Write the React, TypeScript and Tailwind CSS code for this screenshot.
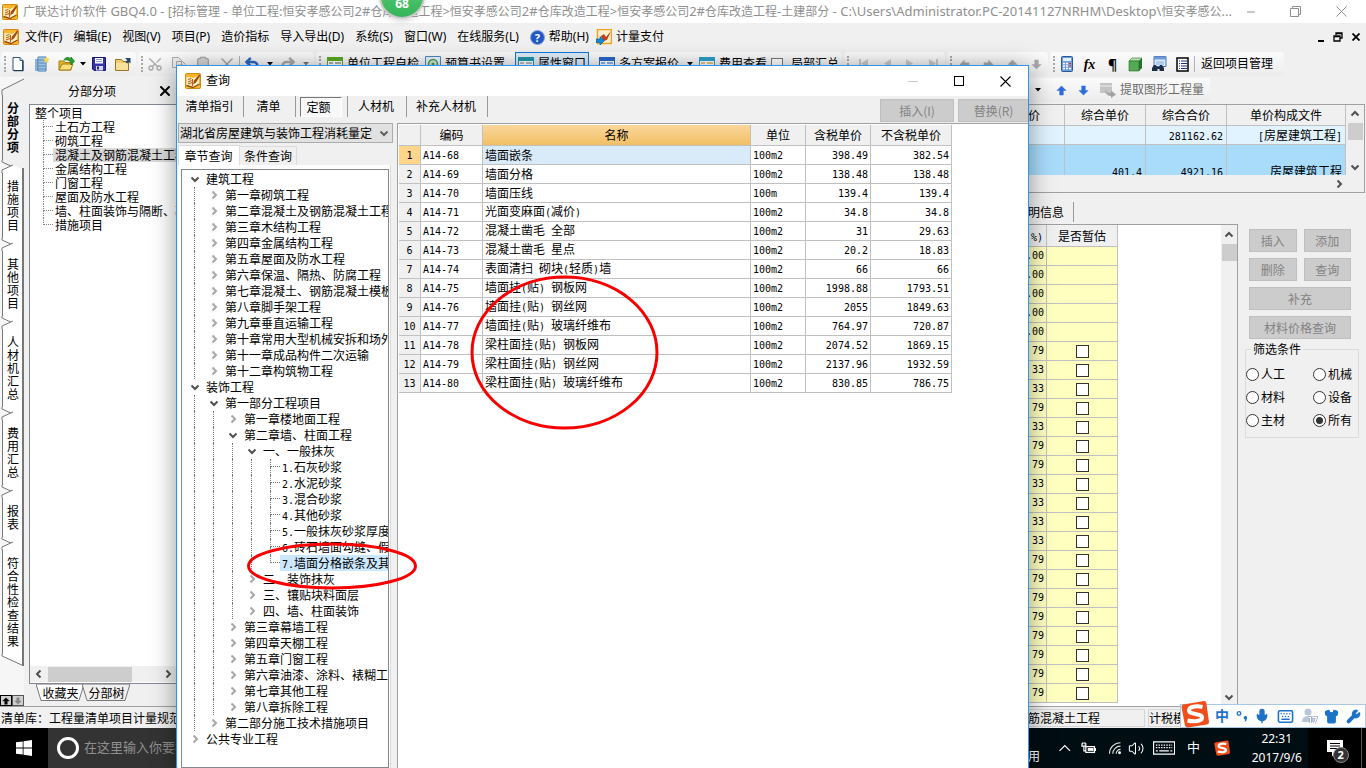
import React from "react";
import clsx from "clsx";
import { Keyboard, Mic, Shirt, Wrench, Volume2, Minus, X, Scissors, Clipboard, Undo2, Redo2 } from "lucide-react";

const song = "font-['Noto_Sans_CJK_SC',sans-serif]";
const ui = "font-['Noto_Sans','Noto_Sans_CJK_SC',sans-serif]";

/* Half-width runs are set in a monospaced face that takes half a Chinese character each. */
function Mixed({ text, latin = "font-['DejaVu_Sans_Mono',monospace] text-[10px]" }: { text: string; latin?: string }) {
  return (
    <>
      {text.split(/([\x20-\x7e]+)/).map((part, i) =>
        i % 2 ? (
          <span key={i} className={clsx("whitespace-pre", latin)}>
            {part}
          </span>
        ) : (
          part
        ),
      )}
    </>
  );
}

function AppIcon({ className = "size-4" }: { className?: string }) {
  return (
    <svg viewBox="0 0 16 16" className={clsx("shrink-0", className)} aria-hidden>
      <rect x="0.5" y="0.5" width="15" height="15" rx="1" fill="#f7b52c" stroke="#d08a10" />
      <path d="M1.500 4 7 4.500l1 .8 6-3.300v9.500l-5.500 3-7-2z" fill="#fff3cf" />
      <path d="M3 6.500 6.500 5.500M3 9l3.500-1.500M3 11l4-1.500M7.500 6v7" stroke="#b5650f" strokeWidth="1.100" fill="none" />
      <path d="M14.500 1 9 7.500 8 11.500l3-2L15 3z" fill="#a8470c" />
      <path d="m1.500 12.500 6.500 2 6.500-3.500" stroke="#9c4a06" strokeWidth="1.400" fill="none" />
    </svg>
  );
}

function Chevron({ dir, className = "text-[#505050]" }: { dir: "up" | "down" | "left" | "right"; className?: string }) {
  const d = { up: "M1.5 6.5 5 3l3.5 3.5", down: "M1.5 3.5 5 7l3.5-3.5", left: "M6.5 1.5 3 5l3.5 3.5", right: "M3.5 1.5 7 5 3.5 8.5" }[dir];
  return (
    <svg viewBox="0 0 10 10" className={clsx("size-[10px] shrink-0", className)} aria-hidden>
      <path d={d} fill="none" stroke="currentColor" strokeWidth="2" />
    </svg>
  );
}

const Grip = () => <span className="mr-1 h-4 w-0 shrink-0 border-l-2 border-dotted border-[#a8a8a8]" />;
const Sep = () => <span className="h-4 w-px shrink-0 bg-[#b4b4b4]" />;
const Caret = ({ className = "text-black" }: { className?: string }) => (
  <svg viewBox="0 0 6 4" className={clsx("h-1 w-[6px] shrink-0", className)} aria-hidden>
    <path d="M0 0h6L3 3.5z" fill="currentColor" />
  </svg>
);

function ToolButton({ label, width = "w-6", className, children }: { label: string; width?: string; className?: string; children: React.ReactNode }) {
  return (
    <button aria-label={label} className={clsx("flex h-5 shrink-0 items-center justify-center", width, className)}>
      {children}
    </button>
  );
}

function ToolGroup({ className, children }: { className: string; children: React.ReactNode }) {
  return (
    <div className={clsx("flex h-6 shrink-0 items-center rounded-sm bg-linear-to-b from-[#fbfbfb] to-[#ececec] pl-[3px]", className)}>
      {children}
    </div>
  );
}

const NewDoc = () => (
  <svg viewBox="0 0 16 16" className="size-4"><path d="M3 1.5h7l3 3v10H3z" fill="#fff" stroke="#2f5577" /><path d="M10 1.5v3h3" fill="#cfe3f5" stroke="#2f5577" /><path d="M12.8 5v9.7H4" fill="none" stroke="#1d3c5c" strokeWidth="1.3" /></svg>
);
const NewBuilding = () => (
  <svg viewBox="0 0 16 16" className="size-4"><path d="M1 3h3v12H1z" fill="#8ab4dc" /><path d="M4 1h8v14H4z" fill="#d7e9f8" stroke="#3f74ad" /><path d="M6 2v12M8 2v12M10 2v12M4 4h8M4 7h8M4 10h8M4 13h8" stroke="#4a7db5" strokeWidth=".8" /><path d="m12.5 0 1 2.3L16 3l-2 1.5.5 2.5-2-1.3-2 1.3.5-2.5L9 3l2.500-.7z" fill="#f6d94b" /></svg>
);
const OpenFolder = () => (
  <svg viewBox="0 0 17 16" className="h-4 w-[17px]"><path d="M1 5h5l1 1.500h6V14H1z" fill="#e5b62c" stroke="#a67d10" /><path d="m1 14 3-6h11l-2.500 6z" fill="#fbe07c" stroke="#a67d10" /><path d="M6 4c1-3 5-3.500 7-.8V1l3.500 4.200L13 9V6.500C11 4 8.500 3.500 6 4z" fill="#2ba32b" stroke="#0d6b12" strokeWidth=".7" /></svg>
);
const Save = () => (
  <svg viewBox="0 0 14 14" className="size-[14px]"><path d="M.5.5h13v13H2l-1.500-1.500z" fill="#3533a8" stroke="#16146e" /><path d="M3 1h8v5.500H3z" fill="#fff" /><path d="M4 2.500h6M4 4.500h6" stroke="#8d9cc8" /><path d="M4 9h7v4.500H4z" fill="#d5d8ef" /><path d="M5 9.500h2v3H5z" fill="#24227e" /></svg>
);
const Folder = () => (
  <svg viewBox="0 0 16 14" className="h-[14px] w-4"><path d="M.5 2.500h6l1.500 2h5.500v9H.5z" fill="#f3cd6c" stroke="#96742a" /><path d="M1 6h12v7H1z" fill="#fbe09a" /><path d="M10 1h5.500v5.500L13.800 5 12 6.500 10.500 5l1.800-1.800z" fill="#25466e" /></svg>
);

function Help() {
  return (
    <span className="flex size-[15px] items-center justify-center rounded-full border border-[#8aa3d8] bg-[#2158c8] text-[11px] leading-none font-bold text-white">?</span>
  );
}

const documentTitle =
  "广联达计价软件 GBQ4.0 - [招标管理 - 单位工程:恒安孝感公司2#仓库改造工程>恒安孝感公司2#仓库改造工程>恒安孝感公司2#仓库改造工程-土建部分 - C:\\Users\\Administrator.PC-20141127NRHM\\Desktop\\恒安孝感公...";

function TitleBar() {
  return (
    <header className="flex h-[23px] shrink-0 items-center bg-white pl-[2px] text-[#8f8f8f]">
      <AppIcon />
      <h1 className="ml-[5px] w-0 flex-1 overflow-hidden text-[12px] leading-5 whitespace-nowrap">
        <Mixed text={documentTitle} latin="text-[13px]" />
      </h1>
      <div className="flex shrink-0 pr-[2px]">
        <button aria-label="最小化" className="flex w-10 justify-center pr-1"><Minus className="h-3 w-3" strokeWidth={2} /></button>
        <button aria-label="还原" className="flex w-[45px] justify-center">
          <svg viewBox="0 0 11 11" className="size-[11px]"><path d="M.5 2.500h8v8h-8zM2.500 2.500v-2h8v8h-2" fill="none" stroke="currentColor" /></svg>
        </button>
        <button aria-label="关闭" className="flex w-[46px] justify-center">
          <svg viewBox="0 0 11 11" className="size-[11px]"><path d="m.5.5 10 10m0-10-10 10" stroke="currentColor" /></svg>
        </button>
      </div>
    </header>
  );
}

const menus = ["文件(F)", "编辑(E)", "视图(V)", "项目(P)", "造价指标", "导入导出(D)", "系统(S)", "窗口(W)", "在线服务(L)"];

function MenuBar() {
  return (
    <nav className="flex h-7 shrink-0 items-center pl-[3px] text-[12px] whitespace-nowrap text-black">
      <AppIcon />
      <div className="ml-[6px] flex gap-[11px]">
        {menus.map((m) => <button key={m}>{m}</button>)}
        <button className="flex items-center gap-1"><Help />帮助(H)</button>
        <button className="-ml-1 flex items-center gap-1">
          <svg viewBox="0 0 16 16" className="size-4"><path d="M1.500.5h14v14h-14z" fill="#fdf0d0" stroke="#f0a21a" strokeWidth="1.500" /><path d="m5 7 3-2 2 3 5-6-4 9-4 1z" fill="#c2401a" /><path d="M0 10h4V7.500l4.500 4.200L4 16v-2.500H0z" fill="#1788d8" stroke="#07528a" strokeWidth=".6" /></svg>
          计量支付
        </button>
      </div>
      <div className="ml-auto flex items-center gap-[9px] pr-[6px]">
        <button aria-label="最小化子窗口" className="flex h-3 items-end pb-px"><span className="h-[2px] w-[6px] bg-black" /></button>
        <button aria-label="还原子窗口"><svg viewBox="0 0 10 10" className="size-[10px]"><path d="M3 3V1h6v5H7M3 1.500h6M1 4h6v5H1zM1 4.500h6" fill="none" stroke="#000" strokeWidth="1.300" /></svg></button>
        <button aria-label="关闭子窗口"><svg viewBox="0 0 8 8" className="size-2"><path d="m.5.5 7 7m0-7-7 7" stroke="#000" strokeWidth="1.800" /></svg></button>
      </div>
    </nav>
  );
}

const gray = "text-[#a9a9a9]";

function Arrow({ turn = "", size = "size-[11px]", className = "text-[#a9a9a9]" }: { turn?: string; size?: string; className?: string }) {
  return (
    <svg viewBox="0 0 12 12" className={clsx(size, turn, className)} aria-hidden><path d="M6 1 1 6h3v5h4V6h3z" fill="currentColor" stroke="currentColor" strokeWidth=".5" /></svg>
  );
}

function TableIcon({ head, body }: { head: string; body: string }) {
  return (
    <svg viewBox="0 0 16 14" className="mr-1 h-[14px] w-4 shrink-0"><path d="M.5.5h15v13H.5z" fill="#fff" stroke={head} /><path d="M0 0h16v4H0z" fill={head} /><path d="M2 6h4M2 9h4M2 12h4M8 6h6M8 9h6M8 12h6" stroke={body} strokeWidth="1.500" /></svg>
  );
}

function Toolbar() {
  return (
    <div className="flex h-[26px] shrink-0 items-center gap-[2px] pl-px text-[12px] whitespace-nowrap">
      <ToolGroup className="w-[135px]">
        <Grip />
        <ToolButton label="新建" className="-ml-1"><NewDoc /></ToolButton>
        <ToolButton label="新建项目"><NewBuilding /></ToolButton>
        <ToolButton label="打开"><OpenFolder /></ToolButton>
        <ToolButton label="打开列表" width="w-[9px]"><Caret /></ToolButton>
        <ToolButton label="保存"><Save /></ToolButton>
        <ToolButton label="文件夹"><Folder /></ToolButton>
      </ToolGroup>
      <ToolGroup className={clsx("w-[176px]", gray)}>
        <Grip />
        <ToolButton label="剪切" className="-ml-1"><Scissors className="size-4 -rotate-90" /></ToolButton>
        <ToolButton label="复制">
          <svg viewBox="0 0 16 16" className="size-4"><path d="M1.500 1.500h6l3 3v7h-9zM5.500 5.500h6l3 3v7h-9z" fill="#eee" stroke="currentColor" /><path d="M7 9h5M7 11h6M7 13h6" stroke="currentColor" /></svg>
        </ToolButton>
        <ToolButton label="粘贴"><Clipboard className="size-4" fill="#d5d5d5" /></ToolButton>
        <ToolButton label="删除"><X className="size-5" /></ToolButton>
        <Sep />
        <ToolButton label="撤销" className="text-[#2d66c4]"><Undo2 className="size-4" strokeWidth={4} /></ToolButton>
        <ToolButton label="撤销列表" width="w-3"><Caret /></ToolButton>
        <ToolButton label="重做"><Redo2 className="size-4" strokeWidth={4} /></ToolButton>
        <ToolButton label="重做列表" width="w-3"><Caret className="text-[#777]" /></ToolButton>
      </ToolGroup>
      <ToolGroup className="w-[526px]">
        <Grip />
        <button className="ml-[2px] flex items-center"><TableIcon head="#5aa820" body="#8a9a80" />单位工程自检</button>
        <button className="ml-[6px] flex items-center">
          <svg viewBox="0 0 16 16" className="mr-1 size-4"><path d="M.5.5h15v15H.5z" fill="#e6f2fb" stroke="#4c87c0" /><circle cx="8" cy="8" r="4.500" fill="#cfe9cf" stroke="#4d9a63" strokeWidth="1.500" /><circle cx="8" cy="8" r="1.500" fill="#4d9a63" /></svg>
          预算书设置
        </button>
        <span className="ml-2"><Sep /></span>
        <button className="ml-[2px] flex h-6 items-center border border-[#0a78d7] bg-[#dcebf8] px-[2px]"><TableIcon head="#1f94a8" body="#9ba7ad" />属性窗口</button>
        <span className="ml-1"><Sep /></span>
        <button className="ml-[6px] flex items-center"><TableIcon head="#2b67c4" body="#5f9be0" /><span className="pr-2">多方案报价</span><Caret /></button>
        <button className="ml-[6px] flex items-center"><TableIcon head="#2a9fc9" body="#e3b04c" />费用查看</button>
        <label className="ml-1 flex items-center gap-2"><input type="checkbox" className="size-3 appearance-none border border-[#777] bg-white" />局部汇总</label>
      </ToolGroup>
      <ToolGroup className={clsx("w-[101px]", gray)}>
        <Grip />
        {["首条", "上一条", "下一条", "末条"].map((l, i) => (
          <ToolButton key={l} label={l} className="-ml-px">
            <svg viewBox="0 0 10 10" className={clsx("size-[10px]", i > 1 && "-scale-x-100")}><path d="M9 0v9L2 4.500z" fill="#c8c8c8" />{(i === 0 || i === 3) && <path d="M1 0v9" stroke="#c8c8c8" strokeWidth="2" />}</svg>
          </ToolButton>
        ))}
      </ToolGroup>
      <ToolGroup className="w-[101px]">
        <Grip />
        <ToolButton label="左移" className="-ml-1"><Arrow turn="-rotate-90" /></ToolButton>
        <ToolButton label="右移"><Arrow turn="rotate-90" /></ToolButton>
        <ToolButton label="上移"><Arrow /></ToolButton>
        <ToolButton label="下移"><Arrow turn="rotate-180" /></ToolButton>
      </ToolGroup>
      <ToolGroup className="w-[234px]">
        <Grip />
        <ToolButton label="计算器" width="w-[22px]" className="-ml-[3px]">
          <svg viewBox="0 0 12 16" className="h-4 w-3"><rect x=".5" y=".5" width="11" height="15" rx="1" fill="#6d9ce0" stroke="#2b5597" /><path d="M2 2h8v3H2z" fill="#e2effc" /><path d="M2 7.500h8M2 10h8M2 12.500h8" stroke="#fff" strokeWidth="1.600" strokeDasharray="2 1" /><path d="M8 7.500h2M8 10h2" stroke="#c43838" strokeWidth="1.600" /></svg>
        </ToolButton>
        <ToolButton label="函数" width="w-[23px]" className="font-['Liberation_Serif',serif] text-[14px] font-bold italic">fx</ToolButton>
        <ToolButton label="段落" width="w-[23px]" className="text-[14px] font-bold">¶</ToolButton>
        <ToolButton label="模型" width="w-[23px]">
          <svg viewBox="0 0 15 15" className="size-[15px]"><path d="m1 4 3-3h10l-3 3z" fill="#b5e3b0" stroke="#256b25" strokeWidth=".6" /><path d="M1 4h10v10H1z" fill="#55a855" stroke="#256b25" strokeWidth=".6" /><path d="m11 4 3-3v10l-3 3z" fill="#25702a" /></svg>
        </ToolButton>
        <ToolButton label="查找">
          <svg viewBox="0 0 16 16" className="size-4"><path d="M3 .5h12v10H3z" fill="#dcecff" stroke="#466fae" /><path d="M3 .5h12v3H3z" fill="#6b98db" /><path d="M5 6h8M5 8h8" stroke="#85a6d6" /><path d="M1 15v-3l2-3h2l1 2h2l1-2h2l2 3v3H8.500v-2h-2v2z" fill="#1e2c48" /></svg>
        </ToolButton>
        <ToolButton label="列表" width="w-[23px]">
          <svg viewBox="0 0 13 15" className="h-[15px] w-[13px]"><path d="M1 1h11v13H1z" fill="#fff" stroke="#000" strokeWidth="1.500" /><path d="M3 4h1M5 4h6M3 6.500h1M5 6.500h6M3 9h1M5 9h6M3 11.500h1M5 11.500h6" stroke="#1b2a88" strokeWidth="1.200" /></svg>
        </ToolButton>
        <Sep />
        <button className="ml-[6px]">返回项目管理</button>
      </ToolGroup>
    </div>
  );
}

const sideTabs = ["分部分项", "措施项目", "其他项目", "人材机汇总", "费用汇总", "报表", "符合性检查结果"];

function SideTabs() {
  return (
    <div className="flex w-6 shrink-0 flex-col overflow-hidden bg-[#f6f6f6] pt-[17px]">
      {sideTabs.map((t, i) => (
        <button key={t} className={clsx("relative flex shrink-0 justify-center pt-[7px] pb-[19px] text-[12px] leading-[13px]", song, i === 0 && "font-bold")}>
          <TabShape active={i === 0} />
          <span className="relative ml-[2px] w-3 break-all">{t}</span>
        </button>
      ))}
      <div className="mt-auto flex">
        <button aria-label="向上" className="flex h-[11px] w-3 items-center justify-center border border-black bg-[#d0d0d0]"><Arrow size="size-2" className="text-black" /></button>
        <button aria-label="向下" className="flex h-[11px] w-3 items-center justify-center border border-[#555] bg-[#d0d0d0]"><Arrow size="size-2" turn="rotate-180" className="text-[#888]" /></button>
      </div>
    </div>
  );
}

function TabShape({ active }: { active: boolean }) {
  const fill = active ? "#f0f0f0" : "#fff";
  return (
    <span className="absolute inset-0 flex flex-col" aria-hidden>
      <svg viewBox="0 0 24 18" className="-mt-[17px] h-[18px] w-6 shrink-0 overflow-visible">
        <path d={active ? "M24 2 2 13v5h22z" : "M13 10 2 15v3h22v-3z"} fill={fill} />
        <path d={active ? "M24 2 2 13v5" : "M13 10 2 15v3"} fill="none" stroke="#777" />
        {!active && <path d="M23 13v5" stroke="#777" strokeWidth="2" />}
      </svg>
      <span className={clsx("ml-[2px] w-[22px] flex-1 border-l border-[#777]", active ? "bg-[#f0f0f0]" : "border-r-2 bg-white")} />
      <svg viewBox="0 0 24 12" className="h-3 w-6 shrink-0">
        <path d="M2 0v2l22 10V0z" fill={fill} />
        <path d="M2 0v2l22 10" fill="none" stroke="#777" />
        {!active && <path d="M23 0v12" stroke="#777" strokeWidth="2" />}
      </svg>
    </span>
  );
}

const sections = ["土石方工程", "砌筑工程", "混凝土及钢筋混凝土工程", "金属结构工程", "门窗工程", "屋面及防水工程", "墙、柱面装饰与隔断、幕墙工程", "措施项目"];

function ProjectPanel() {
  return (
    <aside className={clsx("flex w-[172px] shrink-0 flex-col pl-[5px] text-[12px] whitespace-nowrap", song)}>
      <div className="flex h-[27px] items-center">
        <span className="ml-[39px]">分部分项</span>
        <button aria-label="关闭面板" className="ml-[41px]"><X className="size-4" strokeWidth={3} /></button>
      </div>
      <div className="flex min-h-0 flex-1 flex-col overflow-hidden border border-[#828790] bg-white">
        <ul className="min-h-0 flex-1 pt-px leading-[14px]">
          <li className="pl-[5px]">整个项目</li>
          {sections.map((s, i) => (
            <li key={s} className="flex h-[14px] pl-[13px]">
              <span className="flex w-[10px] shrink-0 flex-col">
                <span className="h-[7px] w-full border-b border-l border-dotted border-[#808080]" />
                {i < sections.length - 1 && <span className="h-[7px] border-l border-dotted border-[#808080]" />}
              </span>
              <span className={clsx("pl-[2px]", i === 2 && "bg-[#d9d9d9]")}>{s}</span>
            </li>
          ))}
        </ul>
        <div className="flex h-4 shrink-0 items-center bg-[#f0f0f0] px-1">
          <Chevron dir="left" />
          <span className="ml-1 h-[15px] w-[84px] bg-[#cdcdcd]" />
          <span className="ml-auto pr-[18px]"><Chevron dir="right" /></span>
        </div>
        <div className="h-px bg-white" />
      </div>
      <div className="flex h-[22px] shrink-0 pl-2">
        {["收藏夹", "分部树"].map((t, i) => (
          <button key={t} className="relative flex h-[18px] w-[46px] items-center justify-center">
            <svg viewBox="0 0 48 18" className="absolute -left-px h-[18px] w-12" aria-hidden><path d="M0 0l5 16.500h38L48 0z" fill={i ? "#f0f0f0" : "#fff"} stroke="#777" /></svg>
            <span className="relative pl-px">{t}</span>
          </button>
        ))}
      </div>
    </aside>
  );
}

const cell = "border-r border-b border-[#c0c0c0] p-0 font-normal";
const taxRows = [".00", ".00", ".00", ".00", ".00", "79", "33", "33", "79", "33", "79", "79", "33", "33", "33", "33", "79", "79", "79", "79", "79", "79", "79", "79"];

function RightSide() {
  const btn = "flex h-[23px] items-center justify-center border border-[#bfbfbf] bg-[#cccccc] text-[#838383]";
  return (
    <section className={clsx("ml-auto flex w-[338px] shrink-0 flex-col text-[12px] whitespace-nowrap", song)}>
      <div className="flex h-[27px] shrink-0 items-center pb-px">
        <div className={clsx("flex h-6 w-[182px] items-center bg-linear-to-b from-[#fbfbfb] to-[#ececec] pl-[7px]", ui)}>
          <Caret />
          <span className="ml-[7px]"><Sep /></span>
          <ToolButton label="上移" className="ml-[2px]" width="w-[22px]"><Arrow className="text-[#2b6be0]" /></ToolButton>
          <ToolButton label="下移" width="w-[22px]"><Arrow turn="rotate-180" className="text-[#2b6be0]" /></ToolButton>
          <button className="ml-[6px] flex items-center gap-1 text-[#6d6d6d]">
            <svg viewBox="0 0 16 16" className="size-4"><path d="M0 1h12v10H0z" fill="#c4c4c4" /><path d="M0 4h12" stroke="#eee" /><path d="M5 7c1 4 4 4 6 4V8.500l5 4-5 3.500v-2C7 14 5 11 5 7z" fill="#a3a3a3" /></svg>
            提取图形工程量
          </button>
        </div>
      </div>
      <div className="mr-px flex shrink-0 flex-col border border-l-0 border-[#a0a0a0]">
        <div className="flex h-[70px] overflow-hidden">
          <div className="h-full flex-1 overflow-hidden bg-[#e1f3ff]">
            <table className="w-full table-fixed border-separate border-spacing-0">
              <colgroup><col className="w-[37px]" /><col className="w-[81px]" /><col className="w-[81px]" /><col /></colgroup>
              <thead>
                <tr className="h-[21px] bg-[#f0f0f0]">
                  <th className={clsx(cell, "text-left")}>价</th><th className={cell}>综合单价</th><th className={cell}>综合合价</th><th className={cell}>单价构成文件</th>
                </tr>
              </thead>
              <tbody className="text-right">
                <tr className="h-[19px]"><td className={cell} /><td className={cell} /><td className={cell}><span className="pr-[3px]"><Mixed text="281162.62" /></span></td><td className={cell}><span className="pr-[3px]"><Mixed text="[房屋建筑工程]" /></span></td></tr>
                <tr className="h-[52px] bg-[#a9dbfb]"><td className={cell} /><td className={cell}><span className="pr-[3px]"><Mixed text="401.4" /></span></td><td className={cell}><span className="pr-[3px]"><Mixed text="4921.16" /></span></td><td className={cell}><span className="pr-[3px]">房屋建筑工程</span></td></tr>
              </tbody>
            </table>
          </div>
          <div className="flex w-[18px] shrink-0 flex-col items-center pt-1">
            <Chevron dir="up" />
            <span className="mt-1 h-[17px] w-[15px] bg-[#cdcdcd]" />
            <span className="mt-auto pb-[3px]"><Chevron dir="down" /></span>
          </div>
        </div>
        <div className="flex h-[17px] items-center justify-end pr-5"><Chevron dir="right" /></div>
      </div>
      <div className="flex h-[31px] shrink-0 items-center pt-[6px]">
        <span className="pr-[9px]">明信息</span><span className="h-5 w-px bg-[#999]" />
      </div>
      <div className="flex min-h-0 flex-1">
        <div className="flex min-h-0 w-[210px] shrink-0 overflow-hidden border-t border-r border-[#a0a0a0] bg-white">
          <table className="h-0 w-[90px] table-fixed border-separate border-spacing-0">
            <colgroup><col className="w-[19px]" /><col className="w-[71px]" /></colgroup>
            <thead><tr className="h-[22px] bg-[#f0f0f0]"><th className={cell}><Mixed text="%)" /></th><th className={cell}>是否暂估</th></tr></thead>
            <tbody>
              {taxRows.map((r, i) => (
                <tr key={i} className="h-[19px] bg-[#ffffc0] leading-4">
                  <td className={clsx(cell, "overflow-hidden")}><span className="flex justify-end pr-[2px]"><Mixed text={r} /></span></td>
                  <td className={cell}>{i > 4 && <input type="checkbox" aria-label={`暂估 ${i + 1}`} className="mx-auto block size-[13px] appearance-none border border-[#333] bg-white" />}</td>
                </tr>
              ))}
            </tbody>
          </table>
          <div className="ml-auto flex w-4 flex-col items-center bg-[#f0f0f0] pt-[5px]">
            <Chevron dir="up" />
            <span className="mt-1 h-[17px] w-[15px] bg-[#cdcdcd]" />
            <span className="mt-auto pb-1"><Chevron dir="down" /></span>
          </div>
        </div>
        <div className="flex-1 pt-[5px] pr-[7px] pl-[7px]">
          <div className="mx-1 mr-2 grid grid-cols-2 gap-x-[7px] gap-y-[6px]">
            <button disabled className={btn}>插入</button><button disabled className={btn}>添加</button>
            <button disabled className={btn}>删除</button><button disabled className={btn}>查询</button>
            <button disabled className={clsx(btn, "col-span-2")}>补充</button>
            <button disabled className={clsx(btn, "col-span-2")}>材料价格查询</button>
          </div>
          <fieldset className="mt-px h-[98px] border border-[#dcdcdc]">
            <legend className="ml-[5px] px-[2px] leading-[18px]">筛选条件</legend>
            <div className="grid grid-cols-[67px_1fr] gap-y-[5px] pt-[7px]">
              {["人工", "机械", "材料", "设备", "主材", "所有"].map((r) => (
                <label key={r} className="flex items-center gap-[2px] leading-[18px]">
                  <input type="radio" name="filter" defaultChecked={r === "所有"} className="flex size-[13px] appearance-none items-center justify-center rounded-full border border-[#333] bg-white checked:before:size-[7px] checked:before:rounded-full checked:before:bg-[#333] checked:before:content-['']" />
                  {r}
                </label>
              ))}
            </div>
          </fieldset>
        </div>
      </div>
    </section>
  );
}

type Node = [level: number, text: string, kind?: "open" | "leaf"];
const nodes: Node[] = [
  [0, "建筑工程", "open"],
  [1, "第一章砌筑工程"],
  [1, "第二章混凝土及钢筋混凝土工程"],
  [1, "第三章木结构工程"],
  [1, "第四章金属结构工程"],
  [1, "第五章屋面及防水工程"],
  [1, "第六章保温、隔热、防腐工程"],
  [1, "第七章混凝土、钢筋混凝土模板"],
  [1, "第八章脚手架工程"],
  [1, "第九章垂直运输工程"],
  [1, "第十章常用大型机械安拆和场外运输"],
  [1, "第十一章成品构件二次运输"],
  [1, "第十二章构筑物工程"],
  [0, "装饰工程", "open"],
  [1, "第一部分工程项目", "open"],
  [2, "第一章楼地面工程"],
  [2, "第二章墙、柱面工程", "open"],
  [3, "一、一般抹灰", "open"],
  [4, "1.石灰砂浆", "leaf"],
  [4, "2.水泥砂浆", "leaf"],
  [4, "3.混合砂浆", "leaf"],
  [4, "4.其他砂浆", "leaf"],
  [4, "5.一般抹灰砂浆厚度调整", "leaf"],
  [4, "6.砖石墙面勾缝、假面砖", "leaf"],
  [4, "7.墙面分格嵌条及其他", "leaf"],
  [3, "二、装饰抹灰"],
  [3, "三、镶贴块料面层"],
  [3, "四、墙、柱面装饰"],
  [2, "第三章幕墙工程"],
  [2, "第四章天棚工程"],
  [2, "第五章门窗工程"],
  [2, "第六章油漆、涂料、裱糊工程"],
  [2, "第七章其他工程"],
  [2, "第八章拆除工程"],
  [1, "第二部分施工技术措施项目"],
  [0, "公共专业工程"],
];

function QuotaTree() {
  return (
    <ul className="flex-1 overflow-hidden border border-[#828790] bg-white pt-px">
      {nodes.map(([level, text, kind], i) => (
        <li key={i} className="flex h-4 items-center pl-[3px] leading-4">
          {Array.from({ length: level }, (_, k) => (
            <span key={k} className="flex h-4 w-[19px] shrink-0 justify-center"><span className="w-px border-l border-dotted border-[#777]" /></span>
          ))}
          <span className={clsx("flex h-4 w-[19px] shrink-0", kind === "leaf" ? "flex-col pl-[9px]" : "items-center justify-center")}>
            {kind === "leaf" ? (
              <>
                <span className="h-2 border-b border-l border-dotted border-[#777]" />
                {i !== 24 && <span className="h-2 border-l border-dotted border-[#777]" />}
              </>
            ) : kind === "open" ? (
              <Chevron dir="down" />
            ) : (
              <Chevron dir="right" className="text-[#a6a6a6]" />
            )}
          </span>
          <span className={clsx("h-4 pl-[2px]", i === 24 && "bg-[#cce8ff]")}><Mixed text={text} /></span>
        </li>
      ))}
    </ul>
  );
}

const quotas = [
  ["A14-68", "墙面嵌条", "100m2", "398.49", "382.54"],
  ["A14-69", "墙面分格", "100m2", "138.48", "138.48"],
  ["A14-70", "墙面压线", "100m", "139.4", "139.4"],
  ["A14-71", "光面变麻面(减价)", "100m2", "34.8", "34.8"],
  ["A14-72", "混凝土凿毛 全部", "100m2", "31", "29.63"],
  ["A14-73", "混凝土凿毛 星点", "100m2", "20.2", "18.83"],
  ["A14-74", "表面清扫 砌块(轻质)墙", "100m2", "66", "66"],
  ["A14-75", "墙面挂(贴) 钢板网", "100m2", "1998.88", "1793.51"],
  ["A14-76", "墙面挂(贴) 钢丝网", "100m2", "2055", "1849.63"],
  ["A14-77", "墙面挂(贴) 玻璃纤维布", "100m2", "764.97", "720.87"],
  ["A14-78", "梁柱面挂(贴) 钢板网", "100m2", "2074.52", "1869.15"],
  ["A14-79", "梁柱面挂(贴) 钢丝网", "100m2", "2137.96", "1932.59"],
  ["A14-80", "梁柱面挂(贴) 玻璃纤维布", "100m2", "830.85", "786.75"],
];

function QuotaTable() {
  return (
    <table className="w-[554px] table-fixed border-separate border-spacing-0 border-l border-white">
      <colgroup><col className="w-[22px]" /><col className="w-[62px]" /><col className="w-[268px]" /><col className="w-[55px]" /><col className="w-[65px]" /><col /></colgroup>
      <thead>
        <tr className="h-[21px] bg-[#f0f0f0]">
          <th className={cell} /><th className={cell}>编码</th>
          <th className={clsx(cell, "bg-linear-to-b from-[#f9d69a] to-[#f2c063]")}>名称</th>
          <th className={cell}>单位</th><th className={cell}>含税单价</th><th className={cell}>不含税单价</th>
        </tr>
      </thead>
      <tbody>
        {quotas.map((q, i) => (
          <tr key={q[0]} className="h-[19px] leading-4">
            <th className={clsx(cell, i === 0 ? "bg-[#fdd58b]" : "bg-[#f0f0f0]")}><Mixed text={String(i + 1)} /></th>
            {q.map((v, c) => (
              <td key={c} className={clsx(cell, c > 2 ? "text-right" : "text-left", i === 0 && c === 1 && "bg-[#d9eaf8]")}>
                <span className="px-[2px]"><Mixed text={v} /></span>
              </td>
            ))}
          </tr>
        ))}
      </tbody>
    </table>
  );
}

function QueryDialog() {
  const btn = "flex h-[23px] items-center justify-center border border-[#bfbfbf] bg-[#cccccc] text-[#838383]";
  const tabs: [string, string][] = [["清单指引", "w-[66px]"], ["清单", "w-[52px]"], ["定额", "w-[52px]"], ["人材机", "w-[59px]"], ["补充人材机", "w-[81px]"]];
  return (
    <section role="dialog" aria-label="查询" className={clsx("absolute top-[65px] right-[337px] bottom-0 left-[176px] flex flex-col border border-b-0 border-[#3391f0] bg-[#f0f0f0] text-[12px] whitespace-nowrap shadow-[0_4px_24px_rgba(0,0,0,0.4)]", song)}>
      <header className={clsx("flex h-[30px] shrink-0 items-center bg-white pl-2", ui)}>
        <AppIcon />
        <h2 className="ml-[5px]">查询</h2>
        <div className="ml-auto flex items-center">
          <button aria-label="最小化" className="flex w-[46px] justify-center"><span className="h-px w-[10px] bg-[#c8c8c8]" /></button>
          <button aria-label="最大化" className="flex w-[46px] justify-center"><span className="size-[10px] border border-black" /></button>
          <button aria-label="关闭" className="flex w-[46px] justify-center">
            <svg viewBox="0 0 11 11" className="size-[11px]"><path d="m.5.5 10 10m0-10-10 10" stroke="#000" strokeWidth="1.100" /></svg>
          </button>
        </div>
      </header>
      <div className="flex h-[27px] shrink-0 pl-px">
        <div className="flex">
          {tabs.map(([t, w]) => (
            <div key={t} className={clsx("flex h-[21px] items-center justify-center border-r border-[#999] pr-[2px]", w)}>
              <button className={clsx(t === "定额" ? "h-5 w-[42px] border border-t-[#777] border-r-white border-b-white border-l-[#777] bg-[#f8f8f8] pr-1" : "pb-[2px]")}>{t}</button>
            </div>
          ))}
        </div>
        <div className="ml-auto flex gap-1 pt-[3px]">
          <button disabled className={clsx(btn, "w-[74px]")}>插入(I)</button>
          <button disabled className={clsx(btn, "w-[70px] border-r-0")}>替换(R)</button>
        </div>
      </div>
      <div className="flex min-h-0 flex-1 pl-px">
        <div className="flex w-[215px] shrink-0 flex-col">
          <select aria-label="定额库" className="h-5 w-full appearance-none border border-[#acacac] bg-[#e1e1e1] pl-px leading-4" defaultValue="hb">
            <option value="hb">湖北省房屋建筑与装饰工程消耗量定</option>
          </select>
          <span className="pointer-events-none -mt-[15px] mb-[5px] flex justify-end pr-1"><Chevron dir="down" className="text-[#606060]" /></span>
          <div className="flex h-[22px] shrink-0 items-end pt-[2px]">
            <button className="h-full w-[62px] border border-b-0 border-[#dcdcdc] bg-white pr-px">章节查询</button>
            <button className="h-[19px] w-[57px] border border-b-0 border-l-0 border-[#dcdcdc]">条件查询</button>
          </div>
          <div className="mr-[2px] flex min-h-0 flex-1 border-r border-[#dcdcdc] bg-white pt-1 pr-px pl-[3px]">
            <QuotaTree />
          </div>
        </div>
        <div className="ml-[4px] flex-1 overflow-hidden border-t border-l border-[#a0a0a0] bg-white pt-px"><QuotaTable /></div>
      </div>
    </section>
  );
}

function StatusBar() {
  return (
    <footer className={clsx("flex h-[22px] shrink-0 items-center border-t border-[#a0a0a0] pl-px text-[12px] whitespace-nowrap", song)}>
      <span>清单库：</span><span>工程量清单项目计量规范</span>
      <div className="ml-auto flex w-[338px]">
        <span className="w-[117px] border-y border-r border-[#d5d5d5] leading-4">筋混凝土工程</span>
        <span className="ml-[3px] flex-1 border border-[#d5d5d5] leading-4">计税模式</span>
      </div>
    </footer>
  );
}

function Sogou({ className }: { className: string }) {
  return (
    <svg viewBox="0 0 28 28" className={clsx("shrink-0", className)} aria-hidden>
      <path d="M2 4.500 23 1q2 0 2.400 2L28 22q0 2-2 2.500L7 27.500q-2.500 0-3-2L.5 7q0-2 1.500-2.500z" fill="#f04e1b" />
      <path d="M21.500 7C15 5.500 8 6.500 8 10.500c0 4.500 13 2.500 13 7 0 4-8 4.500-14.500 3" fill="none" stroke="#fff" strokeWidth="4" />
    </svg>
  );
}

function ImeBar() {
  return (
    <div className="absolute right-0 bottom-10 flex h-6 w-[186px] items-center border border-[#a9c8e6] bg-white text-[#1c73c8]">
      <Sogou className="-mt-1 size-7" />
      <div className="flex flex-1 items-center justify-between pr-1 pl-[6px]">
        <span className="text-[14px] leading-4 font-bold">中</span>
        <svg viewBox="0 0 12 12" className="size-3"><circle cx="3" cy="3.500" r="1.800" fill="none" stroke="currentColor" strokeWidth="1.300" /><path d="M8 6.500q3-1.500 3.200 1.500Q11 11 8.200 12q1.200-1.500 1-2.500Q7 9 8 6.500z" fill="currentColor" /></svg>
        <Mic className="size-4" fill="currentColor" />
        <Keyboard className="size-[17px]" strokeWidth={2.2} />
        <svg viewBox="0 0 17 16" className="h-4 w-[17px]"><circle cx="7" cy="4" r="3.500" fill="#b8c6da" /><path d="M1 14q0-6 6-6t6 6z" fill="#b8c6da" /><path d="M7.500 9.500h2V15M11.500 9.500h4L13.500 15" fill="none" stroke="#8fa3bf" strokeWidth="2.600" /><path d="M7.500 9.500h2V15M11.500 9.500h4L13.500 15" fill="none" stroke="#fff" strokeWidth="1.200" /></svg>
        <Shirt className="size-[15px]" fill="currentColor" />
        <Wrench className="size-[15px]" fill="currentColor" />
      </div>
    </div>
  );
}

function Taskbar() {
  return (
    <footer className={clsx("flex h-10 shrink-0 items-center bg-[#000d12] text-white", ui)}>
      <button aria-label="开始" className="flex h-full w-12 items-center justify-center bg-black">
        <svg viewBox="0 0 16 16" className="size-4"><path d="M0 2.300 6.700 1.400v6.200H0zM7.500 1.300 16 0v7.600H7.500zM0 8.400h6.700v6.200L0 13.700zM7.500 8.400H16V16l-8.500-1.300z" fill="#fff" /></svg>
      </button>
      <div className="flex h-full w-[344px] items-center bg-[#333] pl-[9px]">
        <span className="size-[22px] shrink-0 rounded-full border-[3px] border-white" />
        <input aria-label="搜索" placeholder="在这里输入你要搜索的内容" className="ml-[5px] w-0 flex-1 bg-transparent text-[13px] placeholder:text-[#909090]" />
      </div>
      <div className="ml-auto flex h-full w-[338px] items-center">
        <span className="w-3 self-end pb-[2px] text-[12px]">用</span>
        <svg viewBox="0 0 12 8" className="ml-[19px] h-2 w-3"><path d="m.5 7 5.500-5.500L11.500 7" fill="none" stroke="#fff" strokeWidth="1.200" /></svg>
        <svg viewBox="0 0 16 12" className="ml-[10px] h-3 w-4"><path d="M5 4.500h9v6H5zM15 6v3M1 1v3h4V1M2 0v2M4 0v2M3 4v5h2" fill="none" stroke="#fff" strokeWidth="1.200" /><path d="M7 6h6v3H7z" fill="#fff" /></svg>
        <svg viewBox="0 0 14 14" className="ml-3 size-[14px]"><path d="M1.500 13A11.500 11.500 0 0 1 13 1.500M5 13a8 8 0 0 1 8-8M8.500 13A4.500 4.500 0 0 1 13 8.500" fill="none" stroke="#ddd" strokeWidth="1.200" /><circle cx="12" cy="12" r="1.500" fill="#fff" /></svg>
        <Volume2 className="ml-[7px] size-[17px]" strokeWidth={1.5} />
        <svg viewBox="0 0 23 14" className="ml-2 h-[14px] w-[23px]"><path d="M.6.6h21.800v12.800H.6z" fill="none" stroke="#fff" strokeWidth="1.200" /><path d="M3 4h17M3 6.500h17" stroke="#fff" strokeDasharray="1.500 1.200" strokeWidth="1.300" /><path d="M3 10h2M6.500 10h10M18 10h2" stroke="#fff" strokeWidth="1.300" /></svg>
        <span className="ml-[12px] text-[13px]">中</span>
        <Sogou className="ml-[14px] size-4" />
        <div className="ml-4 w-[64px] text-center text-[12px] leading-[19px]">
          <div>22:31</div><div>2017/9/6</div>
        </div>
        <button aria-label="通知" className="relative ml-auto flex h-full w-[60px] items-center bg-black pl-[19px]">
          <svg viewBox="0 0 16 17" className="h-[17px] w-4"><path d="M0 0h16v12H9l-4 4.500V12H0z" fill="#fff" /><path d="M3 3.500h10M3 6h10M3 8.500h7" stroke="#000" /></svg>
          <span className="absolute top-[19px] left-[25px] flex size-4 items-center justify-center rounded-full border border-[#888] bg-[#333] text-[11px] font-bold">2</span>
          <span className="absolute top-0 right-1 h-full w-px bg-[#555]" />
        </button>
      </div>
    </footer>
  );
}

export default function App() {
  return (
    <div className={clsx("relative flex h-screen w-full flex-col overflow-hidden bg-[#f0f0f0] text-black", ui)}>
      <TitleBar />
      <MenuBar />
      <Toolbar />
      <main className="flex min-h-0 flex-1">
        <SideTabs />
        <ProjectPanel />
        <RightSide />
      </main>
      <StatusBar />
      <Taskbar />
      <QueryDialog />
      <ImeBar />
      <div className="absolute top-[-27px] left-[379px] flex size-[46px] items-end justify-center rounded-full border-2 border-[#c9c9c9] bg-linear-to-b from-[#5fd07a] to-[#34b45a] pb-[5px] text-[12px] leading-4 font-bold text-white shadow-md">68</div>
      <svg className="pointer-events-none absolute inset-0 h-full w-full" fill="none" stroke="#f80000" strokeWidth="3" aria-hidden>
        <ellipse cx="564.5" cy="352.5" rx="92.500" ry="75.500" />
        <ellipse cx="332" cy="566" rx="83.500" ry="22" />
      </svg>
    </div>
  );
}
